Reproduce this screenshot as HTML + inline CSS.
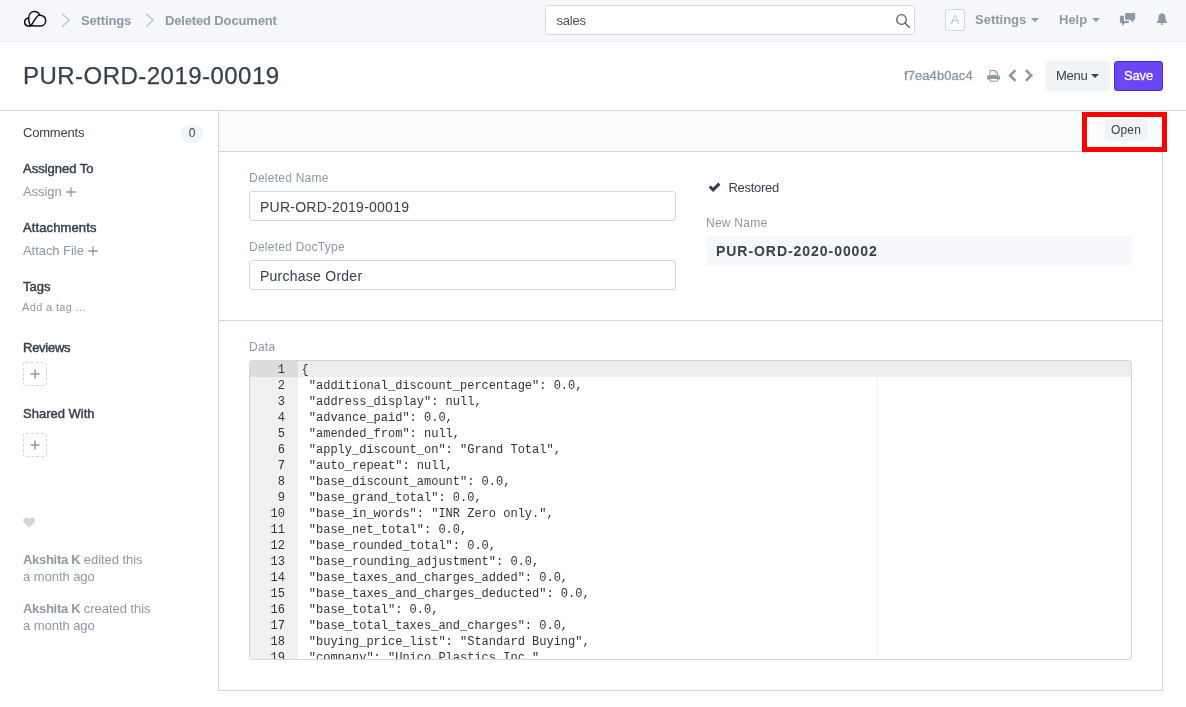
<!DOCTYPE html>
<html>
<head>
<meta charset="utf-8">
<title>PUR-ORD-2019-00019</title>
<style>
*{box-sizing:border-box;margin:0;padding:0}
html,body{width:1186px;height:707px;overflow:hidden;background:#fff}
body{will-change:transform}
body{font-family:"Liberation Sans",sans-serif;font-size:13px;color:#36414c;position:relative}
.abs{position:absolute;white-space:nowrap}
/* navbar */
#nav{position:absolute;left:0;top:0;width:1186px;height:42px;background:#f5f7fa;border-bottom:1px solid #ebeff2}
.crumb{position:absolute;top:13px;font-size:13px;font-weight:bold;color:#8d99a6;line-height:15px;letter-spacing:-0.15px}
#search{position:absolute;left:545px;top:5px;width:370px;height:30px;border:1px solid #d1d8dd;border-radius:4px;background:#fff}
#search span{position:absolute;left:10.5px;top:7px;font-size:13px;line-height:15px;color:#4a4f54;letter-spacing:-0.2px}
.navtxt{position:absolute;top:12px;font-size:13px;font-weight:bold;color:#8d99a6;line-height:15px}
.caret{position:absolute;width:0;height:0;border-left:4px solid transparent;border-right:4px solid transparent;border-top:4px solid #8d99a6}
#avatar{position:absolute;left:945px;top:9px;width:20px;height:22px;border:1px solid #d1d8dd;border-radius:3px;background:#fafbfc;color:#c0c9d1;font-size:13px;line-height:20px;text-align:center}
/* page head */
#title{position:absolute;left:23px;top:61px;font-size:24px;line-height:30px;color:#36414c;letter-spacing:0.47px;-webkit-text-stroke:0.25px #36414c}
#headline{position:absolute;left:0;top:110px;width:1186px;height:1px;background:#d1d8dd}
#docid{position:absolute;left:904px;top:68px;font-size:13px;line-height:15px;color:#8d99a6;letter-spacing:0.08px;-webkit-text-stroke:0.35px #8d99a6}
#menu{position:absolute;left:1045px;top:61px;width:65px;height:30px;background:#f0f4f7;border-radius:3px;font-size:13px;line-height:30px;color:#36414c;padding-left:11px;letter-spacing:-0.3px}
#save{position:absolute;left:1114px;top:61px;width:49px;height:30px;background:#6b46f5;border:1px solid #5129e0;border-radius:3px;font-size:13px;line-height:28px;color:#fff;text-align:center;letter-spacing:-0.2px;-webkit-text-stroke:0.3px #fff}
/* sidebar */
.sb{position:absolute;left:23px;font-size:13px;line-height:15px;white-space:nowrap}
.sb.h{color:#36414c;font-weight:normal;-webkit-text-stroke:0.45px #36414c}
.sb.m{color:#8d99a6;letter-spacing:-0.05px}
.dash{position:absolute;left:23px;width:24px;height:24px;border:1px dashed #d1d8dd;border-radius:3px}
/* main */
#main{position:absolute;left:218px;top:111px;width:945px;height:580px;border-left:1px solid #d1d8dd;border-right:1px solid #d1d8dd;border-bottom:1px solid #d1d8dd;background:#fff}
#toolbar{position:absolute;left:219px;top:111px;width:943px;height:41px;background:#fafbfc;border-bottom:1px solid #d1d8dd}
#open{position:absolute;left:1105px;top:119px;width:42px;height:22px;background:#f0f4f7;border-radius:3px;font-size:12px;line-height:22px;text-align:center;color:#36414c;letter-spacing:0.15px}
#red{position:absolute;left:1082px;top:112px;width:85px;height:40px;border:5px solid #f00}
.lbl{position:absolute;font-size:12px;line-height:14px;color:#8d99a6;white-space:nowrap;letter-spacing:0.25px}
.inp{position:absolute;height:30px;border:1px solid #d1d8dd;border-radius:3px;background:#fff;font-size:14px;line-height:28px;padding:1px 0 0 10px;color:#36414c;letter-spacing:0.25px;white-space:nowrap}
#sec{position:absolute;left:219px;top:320px;width:943px;height:1px;background:#d1d8dd}
/* code */
#code{position:absolute;left:249px;top:360px;width:883px;height:300px;border:1px solid #d1d8dd;border-radius:3px;background:#fff;overflow:hidden}
#gutter{position:absolute;left:0;top:0;width:48px;height:300px;background:#f0f0f0}
#active{position:absolute;left:0;top:0;width:881px;height:16px;background:#eee}
#gactive{position:absolute;left:0;top:0;width:48px;height:16px;background:#dcdcdc}
#margin{position:absolute;left:627px;top:16px;width:1px;height:284px;background:#f1f1f1}
.ln,.cl{position:absolute;font-family:"Liberation Mono",monospace;font-size:12px;line-height:16px;white-space:pre;color:#333}
.ln{left:0;width:35px;text-align:right;margin-top:1px}
.cl{left:51.6px;margin-top:1px}
</style>
</head>
<body>
<div id="nav">
  <svg class="abs" style="left:23px;top:10px" width="24" height="18" viewBox="0 0 24 18" fill="none" stroke="#111" stroke-width="1.5" stroke-linecap="round" stroke-linejoin="round">
    <path d="M7.2 15.8 C6.4 16.1 5.5 16.1 4.7 16 C2.9 15.7 1.6 14 1.6 12 C1.6 9.9 3 8.4 5.4 7.9"/>
    <path d="M7.2 15.8 C6.3 13 5.4 10.4 5.6 8 C5.8 4.4 8 1.6 11.5 1.6 C13.8 1.6 15.7 2.9 16.5 4.9"/>
    <path d="M16.5 4.9 C13.2 6.2 11.4 10.2 9.7 13.2 C9 14.4 8.3 15.2 7.2 15.8"/>
    <path d="M16.5 4.9 C17.1 5 17.7 5.2 18.3 5.4 C21 6 22.7 8.2 22.7 10.8 C22.7 13.9 20.4 16 17.3 16 L8 15.7 L7.2 15.8"/>
  </svg>
  <svg class="abs" style="left:61px;top:13px" width="10" height="15" viewBox="0 0 10 15" fill="none" stroke="#bcc7d1" stroke-width="1.5" stroke-linecap="round" stroke-linejoin="round"><path d="M1.6 1.3 L8.2 7.2 L1.6 13.2"/></svg>
  <div class="crumb" style="left:81px">Settings</div>
  <svg class="abs" style="left:145px;top:13px" width="10" height="15" viewBox="0 0 10 15" fill="none" stroke="#bcc7d1" stroke-width="1.5" stroke-linecap="round" stroke-linejoin="round"><path d="M1.6 1.3 L8.2 7.2 L1.6 13.2"/></svg>
  <div class="crumb" style="left:165px">Deleted Document</div>
  <div id="search"><span>sales</span>
    <svg class="abs" style="left:349px;top:7px" width="16" height="16" viewBox="0 0 16 16" fill="none" stroke="#555d65" stroke-width="1.3" stroke-linecap="round"><circle cx="6.5" cy="6.5" r="4.8"/><path d="M10.2 10.2 L14.2 14.2"/></svg>
  </div>
  <div id="avatar">A</div>
  <div class="navtxt" style="left:975px">Settings</div>
  <div class="caret" style="left:1031px;top:18px"></div>
  <div class="navtxt" style="left:1059px">Help</div>
  <div class="caret" style="left:1092px;top:18px"></div>
  <svg class="abs" style="left:1119px;top:12px" width="17" height="15" viewBox="0 0 17 15" fill="#8d99a6"><path d="M7 0.9 H15.2 Q16.2 0.9 16.2 1.9 V6.8 Q16.2 7.8 15.2 7.8 H14.4 L14.2 10.8 L11.3 7.8 H7 Q6 7.8 6 6.8 V1.9 Q6 0.9 7 0.9 Z"/><path d="M1.9 3.8 H4.9 V8 Q4.9 9 5.9 9 H10 V10 Q10 11 9 11 H6 L3.1 13.9 V11 H1.9 Q0.9 11 0.9 10 V4.8 Q0.9 3.8 1.9 3.8 Z"/></svg>
  <svg class="abs" style="left:1156px;top:12px" width="12" height="14" viewBox="0 0 12 14" fill="#8d99a6"><path d="M6 0.9 C6.4 0.9 6.7 1.2 6.7 1.6 C8.4 2 9.5 3.4 9.5 5.2 C9.5 7.8 10.1 9 11 9.9 C11.5 10.4 11.2 11 10.7 11 H1.3 C0.8 11 0.5 10.4 1 9.9 C1.9 9 2.5 7.8 2.5 5.2 C2.5 3.4 3.6 2 5.3 1.6 C5.3 1.2 5.6 0.9 6 0.9 Z M4.5 11.5 H7.5 C7.5 12.3 6.8 12.9 6 12.9 C5.2 12.9 4.5 12.3 4.5 11.5 Z"/></svg>
</div>
<div id="title">PUR-ORD-2019-00019</div>
<div id="docid">f7ea4b0ac4</div>
<svg class="abs" style="left:987px;top:70px" width="13" height="12" viewBox="0 0 13 12"><path d="M0.1 6.4 Q0.1 5.2 1.3 5.2 H11.8 Q13 5.2 13 6.4 V9.5 H0.1 Z" fill="#8d99a6"/><path d="M2.9 5.6 V0.6 H8.4 L10.5 2.7 V5.6 Z" fill="#fff" stroke="#8d99a6" stroke-width="1"/><path d="M8.2 0.8 V3 H10.4" fill="none" stroke="#8d99a6" stroke-width="0.8"/><path d="M2.9 8.4 H10.5 V11.2 H2.9 Z" fill="#fff" stroke="#8d99a6" stroke-width="1"/><circle cx="11.5" cy="6.5" r="0.55" fill="#fff"/></svg>
<svg class="abs" style="left:1005px;top:67px" width="32" height="18" viewBox="0 0 32 18" fill="none" stroke="#8d99a6" stroke-width="2.6" stroke-linejoin="miter"><path d="M10.45 3.1 L5.1 8.5 L10.45 13.9"/><path d="M20.9 3.1 L26.26 8.5 L20.9 13.9"/></svg>
<div id="menu">Menu<div class="caret" style="left:46px;top:13px;border-top-color:#36414c"></div></div>
<div id="save">Save</div>
<div id="headline"></div>
<!-- sidebar -->
<div class="sb" style="top:125px;color:#36414c;letter-spacing:-0.2px">Comments</div>
<div class="abs" style="left:181px;top:124px;width:22px;height:19px;border-radius:9.5px;background:#f0f4f7;font-size:12px;line-height:19px;text-align:center;color:#36414c">0</div>
<div class="sb h" style="top:161px">Assigned To</div>
<div class="sb m" style="top:184px">Assign</div>
<svg class="abs" style="left:65.5px;top:187px" width="10" height="10" viewBox="0 0 10 10" stroke="#8d99a6" stroke-width="1.3" stroke-linecap="round"><path d="M5 0.8 V9.2 M0.8 5 H9.2"/></svg>
<div class="sb h" style="top:220px;letter-spacing:0.12px">Attachments</div>
<div class="sb m" style="top:243px">Attach File</div>
<svg class="abs" style="left:88px;top:246px" width="10" height="10" viewBox="0 0 10 10" stroke="#8d99a6" stroke-width="1.3" stroke-linecap="round"><path d="M5 0.8 V9.2 M0.8 5 H9.2"/></svg>
<div class="sb h" style="top:279px">Tags</div>
<div class="sb m" style="top:300px;left:22px;font-size:11px;letter-spacing:0.35px">Add a tag ...</div>
<div class="sb h" style="top:340px;letter-spacing:-0.25px">Reviews</div>
<div class="dash" style="top:362px"></div>
<svg class="abs" style="left:30px;top:369px" width="10" height="10" viewBox="0 0 10 10" stroke="#8d99a6" stroke-width="1.5" stroke-linecap="round"><path d="M5 1 V9 M1 5 H9"/></svg>
<div class="sb h" style="top:406px">Shared With</div>
<div class="dash" style="top:433px"></div>
<svg class="abs" style="left:30px;top:440px" width="10" height="10" viewBox="0 0 10 10" stroke="#8d99a6" stroke-width="1.5" stroke-linecap="round"><path d="M5 1 V9 M1 5 H9"/></svg>
<svg class="abs" style="left:23px;top:516.8px" width="12.3" height="11.3" viewBox="0 0 13 12" fill="#d1d8dd"><path d="M6.5 11.5 L1.2 6.2 C-0.2 4.8 -0.1 2.4 1.4 1.2 C2.8 0.1 4.8 0.4 6 1.7 L6.5 2.2 L7 1.7 C8.2 0.4 10.2 0.1 11.6 1.2 C13.1 2.4 13.2 4.8 11.8 6.2 Z"/></svg>
<div class="sb m" style="top:552px"><b style="letter-spacing:-0.3px">Akshita K</b> edited this</div>
<div class="sb m" style="top:569px">a month ago</div>
<div class="sb m" style="top:601px"><b style="letter-spacing:-0.3px">Akshita K</b> created this</div>
<div class="sb m" style="top:618px">a month ago</div>
<!-- main -->
<div id="main"></div>
<div id="toolbar"></div>
<div id="open">Open</div>
<div id="red"></div>
<div class="lbl" style="left:249px;top:171px">Deleted Name</div>
<div class="inp" style="left:249px;top:191px;width:427px">PUR-ORD-2019-00019</div>
<div class="lbl" style="left:249px;top:240px">Deleted DocType</div>
<div class="inp" style="left:249px;top:260px;width:427px">Purchase Order</div>
<svg class="abs" style="left:708px;top:181px" width="14" height="12" viewBox="0 0 14 12" fill="none" stroke="#2e3b48" stroke-width="2.9"><path d="M1.7 5.5 L5.1 8.9 L11.4 2.6"/></svg>
<div class="abs" style="left:728.5px;top:180px;font-size:13px;line-height:15px;color:#36414c;letter-spacing:-0.3px">Restored</div>
<div class="lbl" style="left:706px;top:216px">New Name</div>
<div class="abs" style="left:706px;top:236px;width:426px;height:30px;border-radius:3px;background:#f5f7fa;font-size:14px;font-weight:bold;line-height:30px;padding-left:10px;color:#36414c;letter-spacing:0.95px">PUR-ORD-2020-00002</div>
<div id="sec"></div>
<div class="lbl" style="left:249px;top:340px">Data</div>
<div id="code">
  <div id="active"></div>
  <div id="gutter"></div>
  <div id="gactive"></div>
  <div id="margin"></div>
  <div class="ln" style="top:0px">1</div><div class="cl" style="top:0px">{</div>
  <div class="ln" style="top:16px">2</div><div class="cl" style="top:16px"> "additional_discount_percentage": 0.0,</div>
  <div class="ln" style="top:32px">3</div><div class="cl" style="top:32px"> "address_display": null,</div>
  <div class="ln" style="top:48px">4</div><div class="cl" style="top:48px"> "advance_paid": 0.0,</div>
  <div class="ln" style="top:64px">5</div><div class="cl" style="top:64px"> "amended_from": null,</div>
  <div class="ln" style="top:80px">6</div><div class="cl" style="top:80px"> "apply_discount_on": "Grand Total",</div>
  <div class="ln" style="top:96px">7</div><div class="cl" style="top:96px"> "auto_repeat": null,</div>
  <div class="ln" style="top:112px">8</div><div class="cl" style="top:112px"> "base_discount_amount": 0.0,</div>
  <div class="ln" style="top:128px">9</div><div class="cl" style="top:128px"> "base_grand_total": 0.0,</div>
  <div class="ln" style="top:144px">10</div><div class="cl" style="top:144px"> "base_in_words": "INR Zero only.",</div>
  <div class="ln" style="top:160px">11</div><div class="cl" style="top:160px"> "base_net_total": 0.0,</div>
  <div class="ln" style="top:176px">12</div><div class="cl" style="top:176px"> "base_rounded_total": 0.0,</div>
  <div class="ln" style="top:192px">13</div><div class="cl" style="top:192px"> "base_rounding_adjustment": 0.0,</div>
  <div class="ln" style="top:208px">14</div><div class="cl" style="top:208px"> "base_taxes_and_charges_added": 0.0,</div>
  <div class="ln" style="top:224px">15</div><div class="cl" style="top:224px"> "base_taxes_and_charges_deducted": 0.0,</div>
  <div class="ln" style="top:240px">16</div><div class="cl" style="top:240px"> "base_total": 0.0,</div>
  <div class="ln" style="top:256px">17</div><div class="cl" style="top:256px"> "base_total_taxes_and_charges": 0.0,</div>
  <div class="ln" style="top:272px">18</div><div class="cl" style="top:272px"> "buying_price_list": "Standard Buying",</div>
  <div class="ln" style="top:288px">19</div><div class="cl" style="top:288px"> "company": "Unico Plastics Inc.",</div>
</div>
</body>
</html>
